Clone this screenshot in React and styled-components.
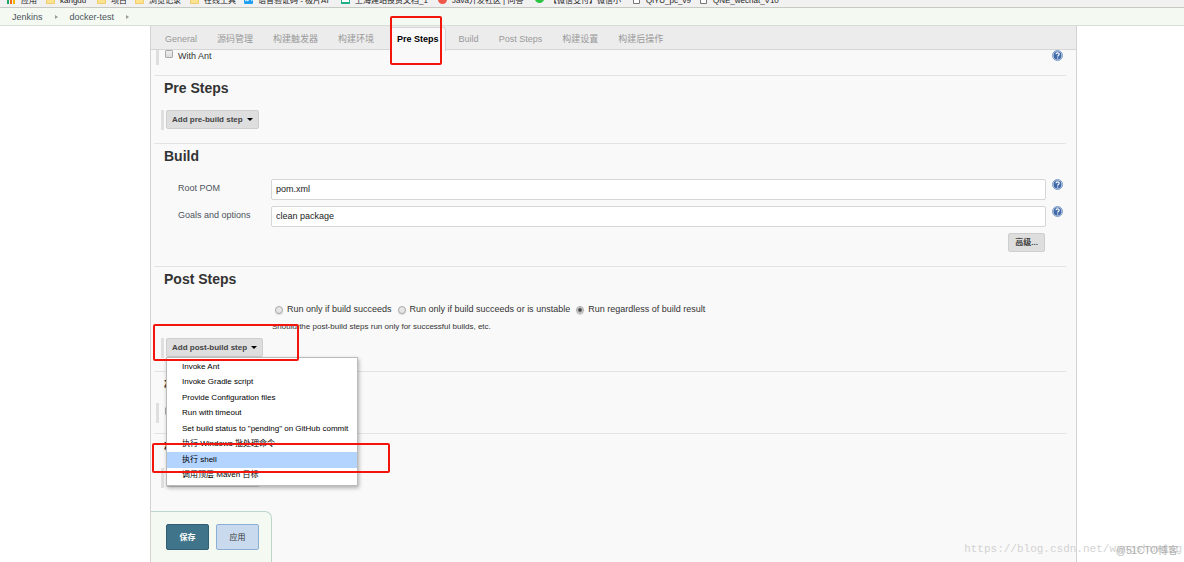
import React, { Component } from "react";
import styled, { createGlobalStyle, css } from "styled-components";

const GlobalStyle = createGlobalStyle`
  * {
    box-sizing: border-box;
  }
  body {
    margin: 0;
    background: #fff;
    color: #333;
    font-family: "Liberation Sans", "Noto Sans CJK SC", sans-serif;
    font-size: 9px;
  }
  button, input {
    font-family: inherit;
    margin: 0;
  }
`;

const Page = styled.div`
  position: relative;
  display: flex;
  flex-direction: column;
  min-height: 100vh;
  overflow: hidden;
`;

const Bookmarks = styled.nav`
  display: flex;
  align-items: flex-end;
  gap: 8px;
  height: 8px;
  padding: 0 7px;
  overflow: hidden;
  background: #f1f1f1;
  border-bottom: 1px solid #c6cac3;
`;

const Bookmark = styled.a`
  display: flex;
  flex: none;
  align-items: flex-end;
  gap: 5px;
  height: 12px;
  font-size: 8px;
  line-height: 12px;
  color: #222;
  text-decoration: none;
  white-space: nowrap;
  min-width: ${(props) => props.$width || 0}px;

  svg {
    flex: none;
    margin-bottom: 3px;
  }
`;

const Breadcrumbs = styled.nav`
  display: flex;
  align-items: center;
  gap: 12px;
  height: 18px;
  padding-left: 12px;
  background: #f4faf2;
  border-bottom: 1px solid #d5dfd5;
`;

const Crumb = styled.a`
  color: #4d545d;
  text-decoration: none;
`;

const CrumbArrow = styled.span`
  border: solid transparent;
  border-width: 2px 0 2px 3px;
  border-left-color: #999;
`;

const Main = styled.main`
  flex: 1;
  display: flex;
  flex-direction: column;
  margin: 0 107px 0 150px;
  background: #f9f9f9;
  border: solid #d3d3d3;
  border-width: 0 1px;
`;

const Tabs = styled.div`
  display: flex;
  height: 24px;
  padding-left: 4px;
  background: #ececec;
  border-bottom: 1px solid #d5d5d5;
`;

const Tab = styled.button`
  height: 24px;
  padding: 1px 10px 0;
  border: 0;
  background: none;
  color: #999;
  font-size: 9px;
  white-space: nowrap;

  ${(props) =>
    props.$active &&
    css`
      margin: 1px 3px 0 6px;
      padding: 0 6px 2px;
      background: #f9f9f9;
      border: 1px solid #d5d5d5;
      border-bottom: 0;
      border-radius: 3px 3px 0 0;
      color: #000;
      font-weight: bold;
    `}
`;

const Form = styled.form`
  padding: 0 10px 0 3px;
`;

const Section = styled.section`
  padding: 4px 0 ${(props) => props.$bottom}px;
  border-top: 1px solid #e3e3e3;
`;

const SectionTitle = styled.h2`
  margin: 0 0 ${(props) => props.$gap || 14}px;
  padding-left: 10px;
  font-size: 14px;
  line-height: 16px;
  color: #333;
`;

const ChunkRow = styled.div`
  display: flex;
  align-items: ${(props) => props.$align || "flex-start"};
  height: 20px;
  margin-left: ${(props) => (props.$outer ? 2 : 7)}px;
  padding-right: 3px;
  border-left: 3px solid #dfdfdf;
  padding-left: ${(props) => (props.$outer ? 6 : 2)}px;
`;

const AntRow = styled(ChunkRow)`
  height: 15px;
  margin-bottom: 10px;
`;

const CheckLabel = styled.label`
  display: flex;
  flex: 1;
  gap: 5px;
  line-height: 12px;
`;

const Checkbox = styled.input`
  appearance: none;
  width: 8px;
  height: 8px;
  border: 1px solid #aaa;
  border-radius: 1px;
  background: linear-gradient(#eee, #dcdcdc);
`;

const HelpButton = styled.button`
  display: block;
  flex: none;
  width: 11px;
  height: 11px;
  padding: 0;
  border: 0;
  background: none;
  cursor: pointer;

  svg {
    display: block;
  }
`;

const GreyButton = styled.button`
  display: flex;
  align-items: center;
  gap: 4px;
  height: 19px;
  padding: 0 5px;
  background: #dedede;
  border: 1px solid #cecece;
  border-radius: 2px;
  color: #444;
  font-size: 8px;
  font-weight: bold;
  white-space: nowrap;
`;

const AdvancedButton = styled(GreyButton)`
  padding: 0 6px 2px;
`;

const Caret = styled.span`
  border: solid transparent;
  border-width: 3px 3px 0;
  border-top-color: #000;
`;

const Field = styled.div`
  display: flex;
  align-items: flex-start;
  padding: 1px 3px 5px 24px;
`;

const FieldLabel = styled.label`
  width: 93px;
  line-height: 18px;
  color: #4d545d;
`;

const TextInput = styled.input`
  flex: 1;
  min-width: 0;
  height: 21px;
  margin-right: 6px;
  padding: 0 4px 1px;
  background: #fff;
  border: 1px solid #d6d6d6;
  border-radius: 2px;
  color: #222;
  font-size: 9px;
`;

const Advanced = styled.div`
  display: flex;
  justify-content: flex-end;
  padding: 1px 21px 0 0;
`;

const Radios = styled.div`
  display: flex;
  gap: 6px;
  height: 16px;
  margin-left: 121px;
`;

const RadioLabel = styled.label`
  display: flex;
  align-items: center;
  gap: 4px;
  line-height: 16px;
  white-space: nowrap;
`;

const Radio = styled.input`
  appearance: none;
  width: 8px;
  height: 8px;
  margin-top: 2px;
  border: 1px solid #aaa;
  border-radius: 50%;
  background: #e6e6e6;
  box-shadow: 0 1px 1px #ddd;

  &:checked {
    background: radial-gradient(circle, #444 0 1px, #e6e6e6 3px);
  }
`;

const Hint = styled.p`
  margin: 4px 0 5px 118px;
  font-size: 8px;
  line-height: 12px;
  color: #333;
`;

const MenuAnchor = styled.div`
  position: relative;
`;

const Menu = styled.ul`
  position: absolute;
  z-index: 2;
  top: 100%;
  left: 0;
  display: grid;
  grid-auto-rows: 1fr;
  width: 192px;
  height: 129px;
  margin: 0;
  padding: 1px 0 2px;
  list-style: none;
  background: #fff;
  border: 1px solid #bbb;
  box-shadow: 1px 2px 4px rgba(0, 0, 0, 0.3);
`;

const MenuItem = styled.li`
  display: flex;
  align-items: center;
  min-height: 0;
  padding-left: 15px;
  background: ${(props) => (props.$selected ? "#b3d4ff" : "none")};
  color: #000;
  font-size: 8px;
  line-height: 12px;
`;

const SaveBar = styled.div`
  display: flex;
  align-self: flex-start;
  gap: 7px;
  margin-top: auto;
  padding: 12px 12px 12px 15px;
  background: #f4faf2;
  border: 1px solid #bcd6c9;
  border-width: 1px 1px 0 0;
  border-radius: 0 7px 0 0;
`;

const SaveButton = styled.button`
  width: 43px;
  height: 26px;
  padding: 0 0 2px;
  background: ${(props) => (props.$primary ? "#40748a" : "#c9daee")};
  border: 1px solid ${(props) => (props.$primary ? "#315e70" : "#8bb0d3")};
  border-radius: 2px;
  color: ${(props) => (props.$primary ? "#fff" : "#333")};
  font-size: 8px;
  font-weight: ${(props) => (props.$primary ? "bold" : "normal")};
`;

// red marker frames drawn over the page
const Marker = styled.div`
  position: absolute;
  z-index: 3;
  top: ${(props) => props.$top}px;
  left: ${(props) => props.$left}px;
  width: ${(props) => props.$width}px;
  height: ${(props) => props.$height}px;
  border: 2px solid #f3140c;
  border-radius: 2px;
  pointer-events: none;
`;

const BlogMark = styled.span`
  position: absolute;
  right: 2px;
  bottom: 6px;
  font-family: "Liberation Mono", monospace;
  font-size: 11px;
  line-height: 14px;
  color: #d3d3d3;
`;

const SiteMark = styled.span`
  position: absolute;
  right: 6px;
  bottom: 4px;
  font-size: 10px;
  line-height: 14px;
  color: #b0b0b0;
`;

const bookmarks = [
  { icon: "apps", text: "应用", width: 31 },
  { icon: "folder", text: "kangdu", width: 43 },
  { icon: "folder", text: "项目" },
  { icon: "folder", text: "浏览记录", width: 47 },
  { icon: "folder", text: "在线工具" },
  { icon: "blue", text: "语音验证码 - 极片AI", width: 89 },
  { icon: "green", text: "上海建站投资文档_1", width: 89 },
  { icon: "red", text: "Java开发社区 | 问答", width: 89 },
  { icon: "chat", text: "【微信支付】微信小", width: 89 },
  { icon: "page", text: "QiYU_pc_v9", width: 59 },
  { icon: "page", text: "QNE_wechat_V10" },
];

const tabs = [
  "General",
  "源码管理",
  "构建触发器",
  "构建环境",
  "Pre Steps",
  "Build",
  "Post Steps",
  "构建设置",
  "构建后操作",
];

const conditions = [
  "Run only if build succeeds",
  "Run only if build succeeds or is unstable",
  "Run regardless of build result",
];

const steps = [
  "Invoke Ant",
  "Invoke Gradle script",
  "Provide Configuration files",
  "Run with timeout",
  'Set build status to "pending" on GitHub commit',
  "执行 Windows 批处理命令",
  "执行 shell",
  "调用顶层 Maven 目标",
];

const BookmarkIcon = ({ type }) => (
  <svg width="9" height="10" viewBox="0 0 9 10">
    {type === "apps" && (
      <>
        <rect x="0" y="5" width="2" height="5" fill="#1fa463" />
        <rect x="3" y="4" width="2" height="6" fill="#f26b1d" />
        <rect x="6" y="2" width="2" height="8" fill="#f4b400" />
      </>
    )}
    {type === "folder" && (
      <path d="M0.5 1h3l1 1h4v7.5h-8z" fill="#fde28f" stroke="#efcd6e" />
    )}
    {type === "blue" && (
      <>
        <rect width="9" height="10" rx="1" fill="#1e9ff2" />
        <path d="M1 7a2 2 0 0 1 3 0a2 2 0 0 1 4 0" fill="none" stroke="#fff" />
      </>
    )}
    {type === "green" && (
      <>
        <rect width="9" height="10" fill="#1fb28a" />
        <rect x="1" y="3" width="7" height="5" fill="#fff" />
      </>
    )}
    {type === "red" && (
      <>
        <circle cx="4.5" cy="5.5" r="4.5" fill="#f0564a" />
        <path d="M3 6l3-3" stroke="#fff" />
      </>
    )}
    {type === "chat" && (
      <ellipse cx="4.5" cy="5" rx="4.5" ry="4" fill="#29c442" />
    )}
    {type === "page" && (
      <path d="M1.5 1.5h4l2 2v6h-6z" fill="#fff" stroke="#777" />
    )}
  </svg>
);

const Help = () => (
  <HelpButton type="button" aria-label="Help">
    <svg width="11" height="11" viewBox="0 0 11 11">
      <circle cx="5.5" cy="5.5" r="5" fill="#cfdbec" stroke="#7d9ac6" />
      <circle cx="5.5" cy="5.5" r="3.9" fill="#3f68a8" />
      <path
        d="M4 4.3c0-2 3.2-2 3.2 0c0 1.1-1.6 1.1-1.6 2.3M5.6 7.4v1.1"
        fill="none"
        stroke="#fff"
        strokeWidth="1.2"
      />
    </svg>
  </HelpButton>
);

export default class App extends Component {
  constructor(props) {
    super(props);
    this.state = {
      rootPom: "pom.xml",
      goals: "clean package",
      condition: 2,
      tab: "Pre Steps",
    };
  }

  handleRootPom = (e) => {
    this.setState({ rootPom: e.target.value });
  };

  handleGoals = (e) => {
    this.setState({ goals: e.target.value });
  };

  render() {
    return (
      <>
        <GlobalStyle />
        <Page>
          <Bookmarks>
            {bookmarks.map((item) => (
              <Bookmark href="#" key={item.text} $width={item.width}>
                <BookmarkIcon type={item.icon} />
                {item.text}
              </Bookmark>
            ))}
          </Bookmarks>
          <Breadcrumbs>
            <Crumb href="#">Jenkins</Crumb>
            <CrumbArrow />
            <Crumb href="#">docker-test</Crumb>
            <CrumbArrow />
          </Breadcrumbs>

          <Main>
            <Tabs>
              {tabs.map((tab) => (
                <Tab
                  key={tab}
                  type="button"
                  $active={tab === this.state.tab}
                  onClick={() => this.setState({ tab })}
                >
                  {tab}
                </Tab>
              ))}
            </Tabs>

            <Form id="config" onSubmit={(e) => e.preventDefault()}>
              <AntRow $outer>
                <CheckLabel>
                  <Checkbox type="checkbox" />
                  With Ant
                </CheckLabel>
                <Help />
              </AntRow>

              <Section $bottom={13}>
                <SectionTitle>Pre Steps</SectionTitle>
                <ChunkRow>
                  <GreyButton type="button">
                    Add pre-build step <Caret />
                  </GreyButton>
                </ChunkRow>
              </Section>

              <Section $bottom={14}>
                <SectionTitle>Build</SectionTitle>
                <Field>
                  <FieldLabel htmlFor="rootPom">Root POM</FieldLabel>
                  <TextInput
                    id="rootPom"
                    value={this.state.rootPom}
                    onChange={this.handleRootPom}
                  />
                  <Help />
                </Field>
                <Field>
                  <FieldLabel htmlFor="goals">Goals and options</FieldLabel>
                  <TextInput
                    id="goals"
                    value={this.state.goals}
                    onChange={this.handleGoals}
                  />
                  <Help />
                </Field>
                <Advanced>
                  <AdvancedButton type="button">高级...</AdvancedButton>
                </Advanced>
              </Section>

              <Section $bottom={13}>
                <SectionTitle>Post Steps</SectionTitle>
                <Radios>
                  {conditions.map((text, i) => (
                    <RadioLabel key={text}>
                      <Radio
                        type="radio"
                        name="condition"
                        checked={this.state.condition === i}
                        onChange={() => this.setState({ condition: i })}
                      />
                      {text}
                    </RadioLabel>
                  ))}
                </Radios>
                <Hint>
                  Should the post-build steps run only for successful builds,
                  etc.
                </Hint>
                <ChunkRow>
                  <MenuAnchor>
                    <GreyButton type="button">
                      Add post-build step <Caret />
                    </GreyButton>
                    <Menu>
                      {steps.map((step) => (
                        <MenuItem key={step} $selected={step === "执行 shell"}>
                          {step}
                        </MenuItem>
                      ))}
                    </Menu>
                  </MenuAnchor>
                </ChunkRow>
              </Section>

              <Section $bottom={10}>
                <SectionTitle $gap={11}>构建设置</SectionTitle>
                <ChunkRow $outer $align="center">
                  <CheckLabel>
                    <Checkbox type="checkbox" />
                    E-mail Notification
                  </CheckLabel>
                </ChunkRow>
              </Section>

              <Section $bottom={13}>
                <SectionTitle>构建后操作</SectionTitle>
                <ChunkRow>
                  <GreyButton type="button">
                    增加构建后操作步骤 <Caret />
                  </GreyButton>
                </ChunkRow>
              </Section>
            </Form>

            <SaveBar>
              <SaveButton form="config" $primary>
                保存
              </SaveButton>
              <SaveButton type="button">应用</SaveButton>
            </SaveBar>
          </Main>

          <Marker $left={390} $top={16} $width={52} $height={49} />
          <Marker $left={153} $top={324} $width={146} $height={37} />
          <Marker $left={152} $top={443} $width={238} $height={30} />
          <BlogMark>https://blog.csdn.net/wangshuming</BlogMark>
          <SiteMark>@51CTO博客</SiteMark>
        </Page>
      </>
    );
  }
}
